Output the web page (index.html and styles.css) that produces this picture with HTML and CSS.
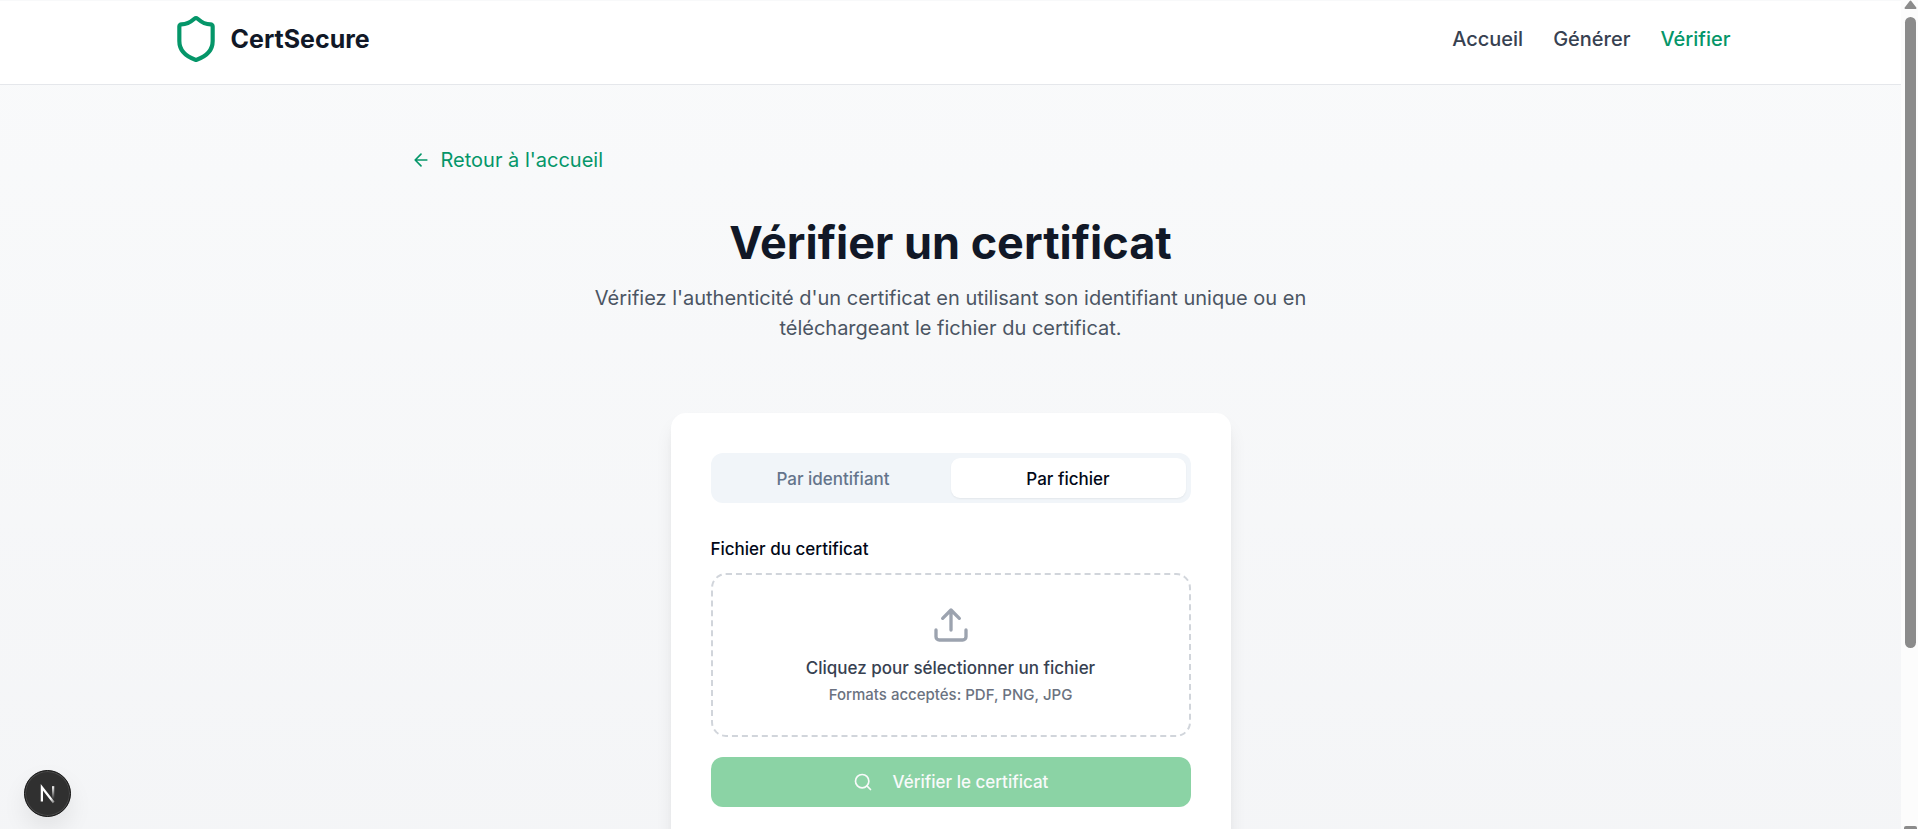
FILE: index.html
```html
<!DOCTYPE html>
<html lang="fr">
<head>
<meta charset="utf-8">
<meta name="viewport" content="width=device-width, initial-scale=1">
<title>CertSecure - Vérifier un certificat</title>
<link rel="stylesheet" href="styles.css">
</head>
<body>
<div class="viewport">
  <div class="page">
    <header class="header">
      <div class="header-inner">
        <a class="brand" href="#">
          <svg class="icon brand-icon" viewBox="0 0 24 24" aria-hidden="true"><path d="M20 13c0 5-3.5 7.5-7.66 8.95a1 1 0 0 1-.67-.01C7.5 20.5 4 18 4 13V6a1 1 0 0 1 1-1c2 0 4.500-1.200 6.240-2.720a1.170 1.170 0 0 1 1.520 0C14.510 3.810 17 5 19 5a1 1 0 0 1 1 1z"/></svg>
          <span>CertSecure</span>
        </a>
        <nav class="nav">
          <a class="nav-link" href="#">Accueil</a>
          <a class="nav-link" href="#">Générer</a>
          <a class="nav-link active" href="#" aria-current="page">Vérifier</a>
        </nav>
      </div>
    </header>
    <main class="main">
      <a class="back" href="#">
        <svg class="icon icon-sm" viewBox="0 0 24 24" aria-hidden="true"><path d="m12 19-7-7 7-7M19 12H5"/></svg>
        <span>Retour à l'accueil</span>
      </a>
      <div class="intro">
        <h1 class="title">Vérifier un certificat</h1>
        <p class="lead">Vérifiez l'authenticité d'un certificat en utilisant son identifiant unique ou en téléchargeant le fichier du certificat.</p>
      </div>
      <section class="card">
        <div class="tabs" role="tablist">
          <button class="tab" type="button" role="tab" aria-selected="false">Par identifiant</button>
          <button class="tab selected" type="button" role="tab" aria-selected="true">Par fichier</button>
        </div>
        <form class="form">
          <label class="label" for="file">Fichier du certificat</label>
          <label class="drop" for="file">
            <svg class="icon icon-lg" viewBox="0 0 24 24" aria-hidden="true"><path d="M21 15v4a2 2 0 0 1-2 2H5a2 2 0 0 1-2-2v-4M17 8l-5-5-5 5M12 3v12"/></svg>
            <span class="drop-title">Cliquez pour sélectionner un fichier</span>
            <span class="drop-hint">Formats acceptés: PDF, PNG, JPG</span>
          </label>
          <input class="file" id="file" type="file" accept=".pdf,.png,.jpg">
          <button class="submit" type="submit" disabled>
            <svg class="icon icon-sm" viewBox="0 0 24 24" aria-hidden="true"><circle cx="11" cy="11" r="8"/><path d="m21 21-4.300-4.300"/></svg>
            <span>Vérifier le certificat</span>
          </button>
        </form>
      </section>
    </main>
    <button class="dev-badge" type="button" aria-label="Next.js">
      <svg class="dev-mark" viewBox="0 0 40 40" aria-hidden="true">
        <defs>
          <linearGradient id="diagonal" gradientUnits="userSpaceOnUse" x1="20" y1="20" x2="28" y2="30"><stop offset="0.400" stop-color="#fff"/><stop offset="1" stop-color="#fff" stop-opacity="0"/></linearGradient>
          <linearGradient id="stem" gradientUnits="userSpaceOnUse" x1="0" y1="13" x2="0" y2="25"><stop offset="0" stop-color="#fff"/><stop offset="1" stop-color="#fff" stop-opacity="0"/></linearGradient>
        </defs>
        <path d="M15 27V14.500L25.500 28" stroke="url(#diagonal)"/>
        <path d="M25 13.500v12.500" stroke="url(#stem)"/>
      </svg>
    </button>
  </div>
  <div class="scrollbar" aria-hidden="true">
    <svg class="arrow" viewBox="0 0 13 9"><path d="M6.500 1.500 11.500 8h-10z"/></svg>
    <div class="track"><div class="thumb"></div></div>
    <div class="arrow-end"></div>
  </div>
</div>
</body>
</html>
```
FILE: styles.css
```css
* { box-sizing: border-box; }
body {
  margin: 0;
  font-family: Inter, "Liberation Sans", sans-serif;
  font-size: 20px;
  line-height: 30px;
  color: #020817;
}
a { color: inherit; text-decoration: none; }
button { font: inherit; border: 0; padding: 0; }
.viewport { display: flex; height: 100vh; overflow: hidden; }
.page {
  flex: 1;
  min-width: 0;
  overflow: hidden;
  border-top: 1px solid #f8f9fa;
  background: linear-gradient(#f9fafb, #f3f4f6 125%);
}
.icon {
  flex: none;
  fill: none;
  stroke: currentColor;
  stroke-width: 2;
  stroke-linecap: round;
  stroke-linejoin: round;
}
.icon-sm { width: 20px; height: 20px; }
.icon-lg { width: 40px; height: 40px; color: #9ca3af; }
.header { background: #fff; border-bottom: 1px solid #e5e7eb; }
.header-inner {
  display: flex;
  align-items: center;
  justify-content: space-between;
  max-width: 1600px;
  margin: 0 auto;
  padding: 13px 20px 20px;
}
.brand {
  display: flex;
  align-items: center;
  gap: 10px;
  font-size: 25px;
  font-weight: 700;
  color: #111827;
}
.brand-icon { width: 50px; height: 50px; color: #059669; }
.nav { display: flex; gap: 30px; font-weight: 500; color: #374151; }
.nav-link.active { color: #059669; }
.main {
  max-width: 1120px;
  margin: 0 auto;
  padding: 60px 20px;
}
.back { display: inline-flex; align-items: center; gap: 10px; color: #059669; }
.intro { max-width: 840px; margin: 40px auto 70px; text-align: center; }
.title { margin: 0 0 15px; font-size: 45px; line-height: 50px; font-weight: 700; color: #111827; }
.lead { margin: 0; padding: 0 20px; color: #4b5563; }
.card {
  max-width: 560px;
  margin: 0 auto;
  padding: 40px;
  border-radius: 15px;
  background: #fff;
  box-shadow: 0 12px 20px -4px rgba(0, 0, 0, 0.1), 0 5px 8px -5px rgba(0, 0, 0, 0.1);
}
.tabs {
  display: grid;
  grid-template-columns: 1fr 1fr;
  padding: 5px;
  border-radius: 12px;
  background: #f1f5f9;
}
.tab {
  padding: 8px 15px 6px;
  border-radius: 9px;
  background: none;
  font-size: 17px;
  line-height: 26px;
  font-weight: 500;
  color: #64748b;
}
.tab.selected { background: #fff; color: #020817; box-shadow: 0 1px 2px rgba(0, 0, 0, 0.06); }
.form { display: flex; flex-direction: column; margin-top: 34px; }
.label { font-size: 17px; line-height: 24px; font-weight: 500; }
.drop {
  display: flex;
  flex-direction: column;
  align-items: center;
  margin: 12px 0 20px;
  padding: 30px;
  border: 2px dashed #d1d5db;
  border-radius: 15px;
  font-weight: 500;
}
.drop-title { margin-top: 10px; font-size: 17px; line-height: 26px; color: #374151; }
.drop-hint { margin-top: 4px; font-size: 15px; line-height: 20px; color: #6b7280; }
.file { position: absolute; width: 1px; height: 1px; opacity: 0; pointer-events: none; }
.submit {
  display: flex;
  align-items: center;
  justify-content: center;
  gap: 20px;
  padding: 12px;
  border-radius: 12px;
  background: #8bd3a5;
  color: #f8fafa;
  font-size: 17px;
  line-height: 26px;
  font-weight: 500;
}
.dev-badge {
  position: fixed;
  left: 24px;
  bottom: 12px;
  width: 47px;
  height: 47px;
  border: 1px solid #111;
  border-radius: 50%;
  background: #303030;
  box-shadow: inset 0 0 0 1px #4a4a4a, 0 12px 24px rgba(0, 0, 0, 0.08);
}
.dev-mark { display: block; width: 100%; fill: none; stroke-width: 2; }
.scrollbar {
  flex: none;
  display: flex;
  flex-direction: column;
  align-items: center;
  width: 17px;
  padding-left: 2px;
  background: #fcfcfc;
}
.arrow { width: 13px; height: 9px; fill: #8b8b8b; stroke: #8b8b8b; stroke-width: 2; stroke-linejoin: round; }
.track { flex: 1; padding-top: 8px; }
.thumb { width: 11px; height: 78%; border-radius: 6px; background: #8b8b8b; }
.arrow-end { width: 13px; height: 3px; border-radius: 2px 2px 0 0; background: #8b8b8b; }
```
